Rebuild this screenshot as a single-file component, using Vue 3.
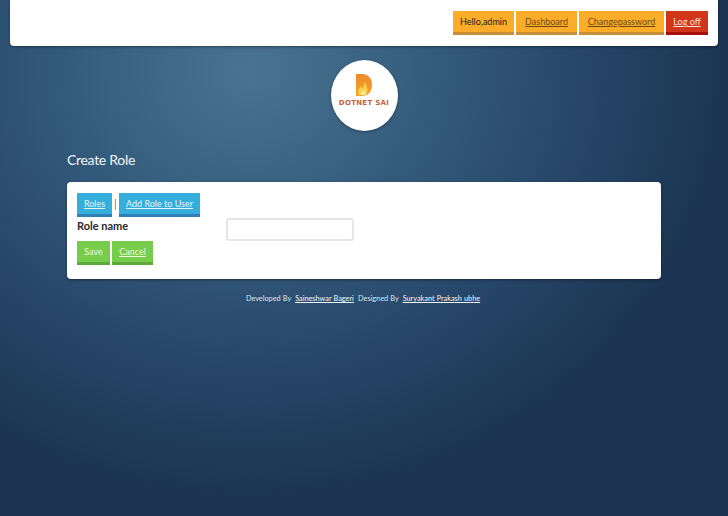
<script setup>
const menu = [
  { label: 'Dashboard', href: '#', width: '61px' },
  { label: 'Changepassword', href: '#', width: '85px' },
]
</script>

<template>
  <div class="page">
    <header class="topbar">
      <span class="btn orange hello">Hello,admin</span>
      <a
        v-for="item in menu"
        :key="item.label"
        class="btn orange dark-link"
        :style="{ width: item.width }"
        :href="item.href"
      >{{ item.label }}</a>
      <a class="btn red" href="#">Log off</a>
    </header>

    <div class="logo">
      <svg width="16" height="22" viewBox="0 0 16 22">
        <defs>
          <linearGradient id="flame" x1="0" y1="0" x2="0" y2="1">
            <stop offset="0" stop-color="#ee8a2a" />
            <stop offset="1" stop-color="#f4a428" />
          </linearGradient>
        </defs>
        <path d="M0 0H6C12 0 16 4 16 11C16 18 12 22 6 22H0Z" fill="url(#flame)" />
        <path d="M3 21C1.5 17 3 14 5 12C5.5 14 6 15 7 14C8 12 8 10 8 8C10.5 11 12.5 15 11 19C10.5 20 10 21 9 21Z" fill="#f9d24a" />
        <path d="M5 21C4.5 19 5.5 18 6.5 16.5C7 18 8 18 8.5 16.5C9.5 18 9.5 20 8.5 21Z" fill="#fbe9a0" />
      </svg>
      <span class="logo-text">DOTNET SAI</span>
    </div>

    <main class="content">
      <h2>Create Role</h2>
      <section class="card">
        <div class="tabs">
          <a class="btn blue roles" href="#">Roles</a>
          <span class="sep">|</span>
          <a class="btn blue add" href="#">Add Role to User</a>
        </div>
        <div class="field">
          <label>Role name</label>
          <input type="text" />
        </div>
        <div class="actions">
          <span class="btn green save">Save</span>
          <a class="btn green cancel" href="#">Cancel</a>
        </div>
      </section>
    </main>

    <footer class="foot">
      Developed By <a href="#">Saineshwar Bageri</a> Designed By <a href="#">Suryakant Prakash ubhe</a>
    </footer>
  </div>
</template>

<style>
html, body {
  margin: 0;
  background: #1c304d;
}
</style>

<style scoped>
.page {
  width: 728px;
  height: 516px;
  overflow: hidden;
  box-sizing: border-box;
  padding: 0 10px;
  font-family: Lato, "Liberation Sans", sans-serif;
  background: radial-gradient(ellipse 480px 430px at 250px 70px, #4a7391 0%, #386080 30%, #28496c 65%, #1c3451 100%);
}
.topbar {
  height: 46px;
  box-sizing: border-box;
  background: #fff;
  border-radius: 0 0 4px 4px;
  display: flex;
  justify-content: flex-end;
  align-items: flex-start;
  gap: 2px;
  padding: 11px 10px 0 0;
  box-shadow: 0 1px 3px rgba(0, 0, 0, 0.4);
}
.btn {
  display: inline-block;
  box-sizing: border-box;
  height: 24px;
  line-height: 22px;
  font-size: 9px;
  text-align: center;
  border-bottom: 3px solid;
}
.orange {
  background: #fbac28;
  border-color: #c78e35;
  color: #3b2c12;
}
.hello { width: 61px; color: #222; text-decoration: none; }
.dark-link { color: #6a4a14; }
.red {
  width: 42px;
  background: #d1361a;
  border-color: #a80f0a;
  color: #fbe3dc;
}
.logo {
  width: 67px;
  height: 71px;
  margin: 14px auto 0;
  border-radius: 50%;
  background: #fff;
  box-shadow: 0 1px 3px rgba(0, 0, 0, 0.35);
  display: flex;
  flex-direction: column;
  align-items: center;
  box-sizing: border-box;
  padding-top: 14px;
}
.logo-text {
  margin-top: 3px;
  font-family: "DejaVu Sans", sans-serif;
  font-size: 7px;
  letter-spacing: 0.3px;
  font-weight: 700;
  line-height: 9px;
  color: #c9623a;
  white-space: nowrap;
}
.content {
  margin: 19px 57px 0;
}
h2 {
  margin: 0;
  height: 32px;
  line-height: 20px;
  font-size: 14px;
  letter-spacing: -0.3px;
  font-weight: 400;
  color: #f2f5f7;
}
.card {
  height: 97px;
  box-sizing: border-box;
  background: #fff;
  border-radius: 4px;
  padding: 11px 10px 0;
  box-shadow: 0 1px 3px rgba(0, 0, 0, 0.4);
}
.tabs, .actions {
  display: flex;
  gap: 2px;
}
.tabs .sep {
  width: 3px;
  line-height: 22px;
  font-size: 11px;
  color: #777;
  text-align: center;
}
.blue {
  background: #35aedb;
  border-color: #2f7fb8;
  color: #e8f6fb;
}
.roles { width: 35px; }
.add { width: 81px; }
.field {
  display: flex;
  height: 23px;
  margin-top: 1px;
}
label {
  width: 149px;
  font-size: 11px;
  font-weight: 700;
  line-height: 16px;
  color: #2a2a2a;
}
input {
  width: 128px;
  height: 23px;
  box-sizing: border-box;
  background: #fff;
  border: 2px solid #e6e6e6;
  border-radius: 3px;
  outline: none;
}
.green {
  background: #77cc4b;
  border-color: #5fa83c;
  color: #eaf8e0;
  text-decoration: none;
}
.save { width: 33px; }
.cancel { width: 41px; }
a.green { text-decoration: underline; }
.foot {
  margin-top: 14px;
  text-align: center;
  font-size: 7.3px;
  line-height: 11px;
  color: #dfe6ec;
  word-spacing: 0.3px;
}
.foot a { color: #f4f7f9; margin: 0 2px; }
</style>
